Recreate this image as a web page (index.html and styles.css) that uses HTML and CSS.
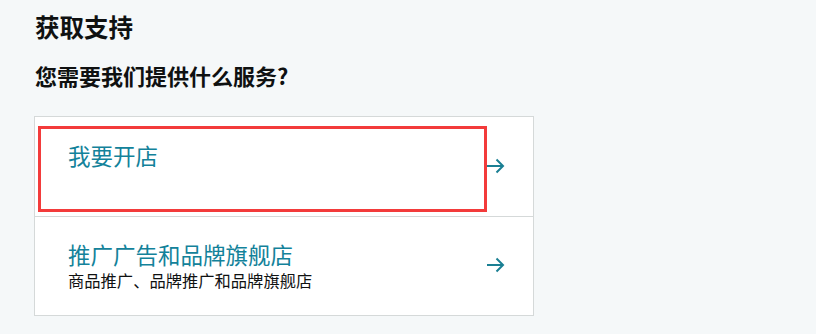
FILE: index.html
```html
<!DOCTYPE html>
<html lang="zh-CN">
<head>
<meta charset="UTF-8">
<meta name="viewport" content="width=device-width, initial-scale=1.0">
<title>获取支持</title>
<link rel="stylesheet" href="styles.css">
</head>
<body>
<div class="page">
    <h1>获取支持</h1>
    <h2>您需要我们提供什么服务?</h2>

    <div class="card">
        <!-- Option 1 -->
        <a class="option" href="#">
            <div class="option-text">
                <div class="option-title">我要开店</div>
                <div class="option-desc"></div>
            </div>
            <svg class="arrow" width="18" height="16" viewBox="0 0 18 16">
                <path d="M0 8 H16 M9.5 1.5 L16 8 L9.5 14.5" fill="none" stroke="#1a7f93" stroke-width="2"/>
            </svg>
            <span class="highlight"></span>
        </a>

        <!-- Option 2 -->
        <a class="option" href="#">
            <div class="option-text">
                <div class="option-title">推广广告和品牌旗舰店</div>
                <div class="option-desc">商品推广、品牌推广和品牌旗舰店</div>
            </div>
            <svg class="arrow" width="18" height="16" viewBox="0 0 18 16">
                <path d="M0 8 H16 M9.5 1.5 L16 8 L9.5 14.5" fill="none" stroke="#1a7f93" stroke-width="2"/>
            </svg>
        </a>
    </div>
</div>
</body>
</html>
```

FILE: styles.css
```css
body {
    font-family: "Noto Sans CJK SC", "Noto Sans", sans-serif;
    margin: 0;
    padding: 0;
    background-color: #f5f8f9;
    color: #0f1111;
}
.page {
    padding: 9px 0 0 34px;
}
h1 {
    font-size: 24.5px;
    font-weight: bold;
    line-height: 36px;
    margin: 0 0 0 1px;
}
h2 {
    font-size: 22px;
    font-weight: bold;
    line-height: 32px;
    margin: 14px 0 0 1px;
}
.card {
    width: 498px;
    margin-top: 25px;
    background-color: #fff;
    border: 1px solid #d5d9d9;
}
.option {
    position: relative;
    display: flex;
    align-items: center;
    justify-content: space-between;
    height: 99px;
    padding: 0 28px 0 33px;
    text-decoration: none;
}
.option + .option {
    height: 98px;
    border-top: 1px solid #d5d9d9;
}
.option-title {
    font-size: 22.5px;
    line-height: 28px;
    color: #13829a;
}
.option-desc {
    font-size: 16.3px;
    line-height: 24px;
    height: 24px;
    color: #0f1111;
}
.arrow {
    flex: none;
    margin-top: -2px;
}
.highlight {
    position: absolute;
    left: 3px;
    top: 9px;
    width: 443px;
    height: 80px;
    border: 3px solid #f33b3b;
    pointer-events: none;
}
```
